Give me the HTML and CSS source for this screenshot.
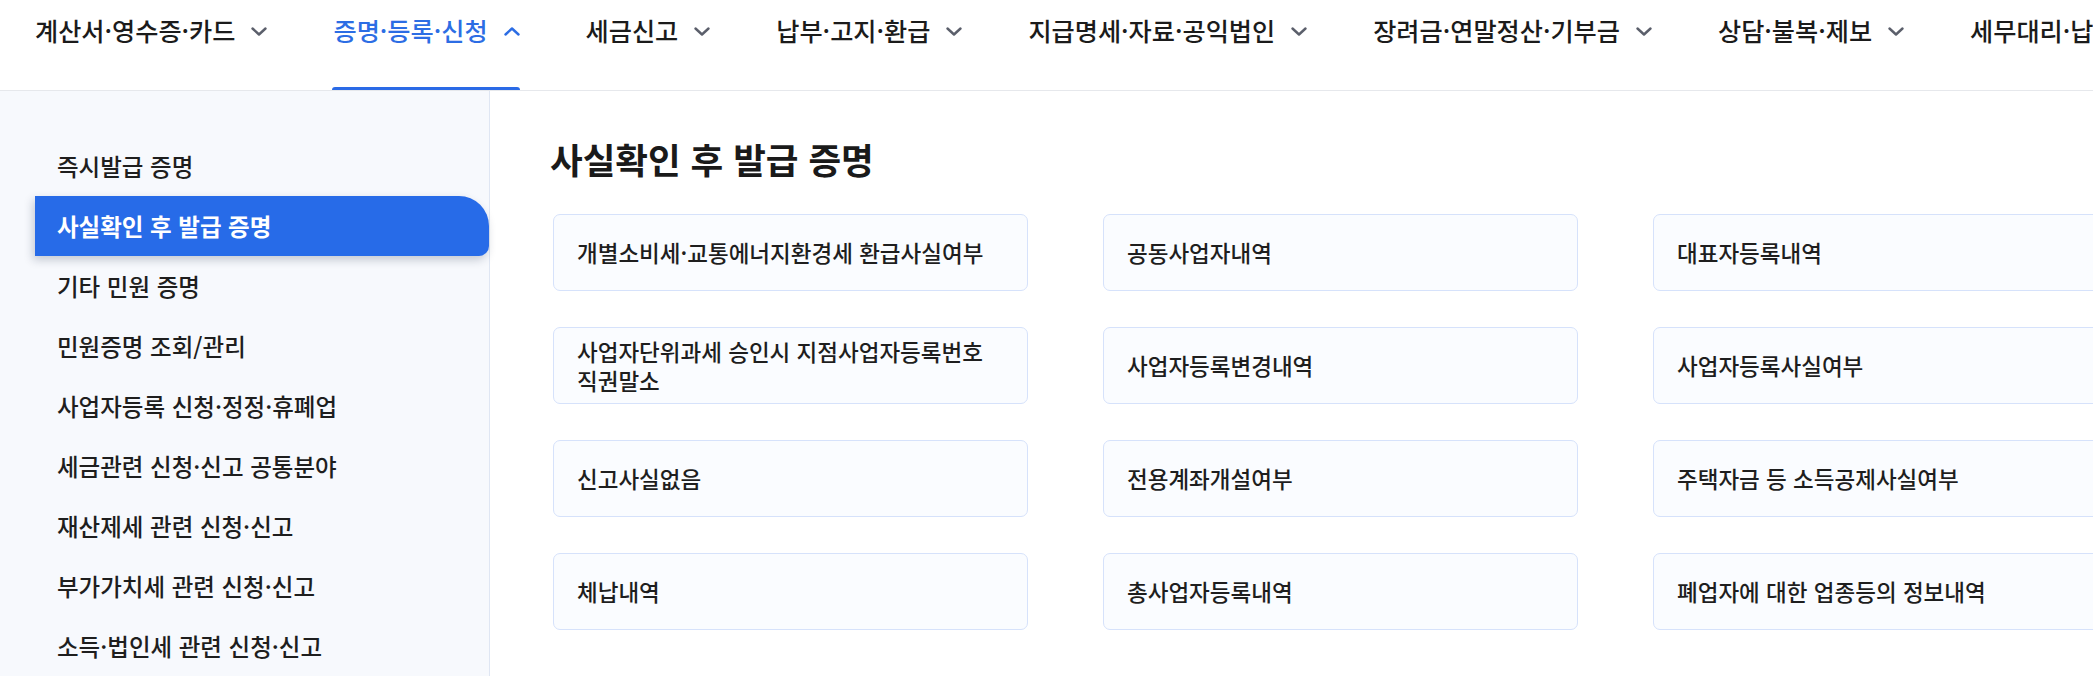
FILE: index.html
```html
<!DOCTYPE html>
<html lang="ko">
<head>
<meta charset="utf-8">
<title>사실확인 후 발급 증명</title>
<link rel="stylesheet" href="styles.css">
</head>
<body>
<header class="gnb">
  <ul class="gnb-list">
    <li class="gnb-item"><span class="gnb-text">계산서·영수증·카드</span><svg class="chev" viewBox="0 0 16 9" width="16" height="9"><polyline points="1.5,1.5 8,7.5 14.5,1.5"/></svg></li>
    <li class="gnb-item is-active"><span class="gnb-text">증명·등록·신청</span><svg class="chev" viewBox="0 0 16 9" width="16" height="9"><polyline points="1.5,7.5 8,1.5 14.5,7.5"/></svg></li>
    <li class="gnb-item"><span class="gnb-text">세금신고</span><svg class="chev" viewBox="0 0 16 9" width="16" height="9"><polyline points="1.5,1.5 8,7.5 14.5,1.5"/></svg></li>
    <li class="gnb-item"><span class="gnb-text">납부·고지·환급</span><svg class="chev" viewBox="0 0 16 9" width="16" height="9"><polyline points="1.5,1.5 8,7.5 14.5,1.5"/></svg></li>
    <li class="gnb-item"><span class="gnb-text">지급명세·자료·공익법인</span><svg class="chev" viewBox="0 0 16 9" width="16" height="9"><polyline points="1.5,1.5 8,7.5 14.5,1.5"/></svg></li>
    <li class="gnb-item"><span class="gnb-text">장려금·연말정산·기부금</span><svg class="chev" viewBox="0 0 16 9" width="16" height="9"><polyline points="1.5,1.5 8,7.5 14.5,1.5"/></svg></li>
    <li class="gnb-item"><span class="gnb-text">상담·불복·제보</span><svg class="chev" viewBox="0 0 16 9" width="16" height="9"><polyline points="1.5,1.5 8,7.5 14.5,1.5"/></svg></li>
    <li class="gnb-item"><span class="gnb-text">세무대리·납세관리</span><svg class="chev" viewBox="0 0 16 9" width="16" height="9"><polyline points="1.5,1.5 8,7.5 14.5,1.5"/></svg></li>
  </ul>
</header>
<div class="body-wrap">
  <nav class="lnb">
    <ul class="lnb-list">
      <li class="lnb-item">즉시발급 증명</li>
      <li class="lnb-item is-active">사실확인 후 발급 증명</li>
      <li class="lnb-item">기타 민원 증명</li>
      <li class="lnb-item">민원증명 조회/관리</li>
      <li class="lnb-item">사업자등록 신청·정정·휴폐업</li>
      <li class="lnb-item">세금관련 신청·신고 공통분야</li>
      <li class="lnb-item">재산제세 관련 신청·신고</li>
      <li class="lnb-item">부가가치세 관련 신청·신고</li>
      <li class="lnb-item">소득·법인세 관련 신청·신고</li>
    </ul>
  </nav>
  <main class="content">
    <h2 class="title">사실확인 후 발급 증명</h2>
    <div class="card-grid">
      <a class="card">개별소비세·교통에너지환경세 환급사실여부</a>
      <a class="card">공동사업자내역</a>
      <a class="card">대표자등록내역</a>
      <a class="card">사업자단위과세 승인시 지점사업자등록번호 직권말소</a>
      <a class="card">사업자등록변경내역</a>
      <a class="card">사업자등록사실여부</a>
      <a class="card">신고사실없음</a>
      <a class="card">전용계좌개설여부</a>
      <a class="card">주택자금 등 소득공제사실여부</a>
      <a class="card">체납내역</a>
      <a class="card">총사업자등록내역</a>
      <a class="card">폐업자에 대한 업종등의 정보내역</a>
    </div>
  </main>
</div>
</body>
</html>
```

FILE: styles.css
```css
* { box-sizing: border-box; }
html, body {
  margin: 0;
  padding: 0;
  overflow: hidden;
  background: #ffffff;
}
body {
  font-family: "Noto Sans CJK KR", "Noto Sans", sans-serif;
  color: #1e1e1e;
  width: 2093px;
  height: 676px;
}
ul { list-style: none; margin: 0; padding: 0; }

/* top navigation */
.gnb {
  height: 91px;
  border-bottom: 1px solid #e6e8ec;
  overflow: hidden;
}
.gnb-list {
  display: flex;
  gap: 66px;
  padding-left: 35px;
  height: 90px;
  white-space: nowrap;
}
.gnb-item {
  position: relative;
  display: flex;
  align-items: flex-start;
  gap: 16px;
  height: 90px;
  padding-top: 16px;
  font-size: 25.2px;
  line-height: 28px;
  font-weight: 500;
  color: #1b1b1b;
}
.gnb-text { display: block; }
.chev {
  margin-top: 11px;
  fill: none;
  stroke: #5b5f6b;
  stroke-width: 2.4;
  stroke-linecap: round;
  stroke-linejoin: round;
}
.gnb-item.is-active { color: #2c6de4; }
.gnb-item.is-active .chev { stroke: #2c6de4; }
.gnb-item.is-active::after {
  content: "";
  position: absolute;
  left: -1px;
  right: 0;
  bottom: -1px;
  height: 4px;
  border-radius: 3px 3px 0 0;
  background: #2a6ae6;
}

/* layout */
.body-wrap {
  display: flex;
  height: 585px;
}

/* left navigation */
.lnb {
  flex: 0 0 490px;
  background: #f7f9fd;
  border-right: 1px solid #dfe6f3;
  padding: 45px 0 0 35px;
}
.lnb-item {
  height: 60px;
  display: flex;
  align-items: center;
  padding-left: 22px;
  font-size: 23.5px;
  font-weight: 500;
  color: #1e1e1e;
}
.lnb-item.is-active {
  background: #276be8;
  color: #ffffff;
  font-weight: 600;
  border-radius: 0 30px 10px 0;
  box-shadow: -2px 4px 10px rgba(20, 30, 60, 0.22);
}

/* content */
.content {
  flex: 1 1 auto;
  padding: 44px 0 0 63px;
  min-width: 0;
}
.title {
  margin: 0 0 0 -3px;
  font-size: 35.5px;
  line-height: 48px;
  font-weight: 700;
  color: #1a1a1a;
}
.card-grid {
  margin-top: 31px;
  display: grid;
  grid-template-columns: repeat(3, 475px);
  grid-auto-rows: 77px;
  column-gap: 75px;
  row-gap: 36px;
}
.card {
  display: flex;
  align-items: center;
  padding: 0 23px;
  border: 1px solid #d6e2fb;
  border-radius: 7px;
  background: #fafcff;
  font-size: 22.5px;
  line-height: 29px;
  font-weight: 500;
  color: #1e1e1e;
}
```
